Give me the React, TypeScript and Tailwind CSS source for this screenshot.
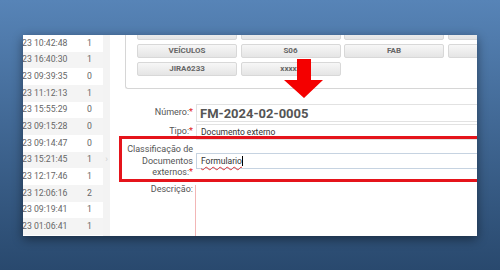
const rows: [string, string][] = [
  ["23 10:42:48", "1"],
  ["23 16:40:30", "1"],
  ["23 09:39:35", "0"],
  ["23 11:12:13", "1"],
  ["23 15:55:29", "0"],
  ["23 09:15:28", "0"],
  ["23 09:14:47", "0"],
  ["23 15:21:45", "1"],
  ["23 12:17:46", "1"],
  ["23 12:06:16", "2"],
  ["23 09:19:41", "1"],
  ["23 01:06:41", "1"],
];

const buttons = ["", "", "", "", "VEÍCULOS", "S06", "FAB", "", "JIRA6233", "xxxxx"];

function Label({ children, req }: { children: React.ReactNode; req?: boolean }) {
  return (
    <div className="w-[83px] shrink-0 text-right text-[9px] leading-[11.5px] text-[#555]">
      {children}
      {req && <span className="text-[#e02020]">*</span>}
    </div>
  );
}

export default function App() {
  return (
    <div className="relative w-[500px] h-[270px] overflow-hidden bg-gradient-to-b from-[#5784b7] to-[#29496e] pt-[35px] pl-[23px] font-['Roboto',sans-serif]">
      <div className="relative flex w-[454px] h-[201px] bg-white overflow-hidden shadow-[0_3px_10px_rgba(0,0,0,0.45)]">
        {/* history list */}
        <div className="w-[80px] shrink-0">
          {rows.map(([t, n], i) => (
            <div
              key={i}
              className={`flex items-center h-[16.67px] text-[8.7px] text-[#666] ${i % 2 ? "bg-[#f4f4f4]" : "bg-white"}`}
            >
              <span className="w-[65px] -ml-[1px] whitespace-nowrap">{t}</span>
              <span>{n}</span>
            </div>
          ))}
        </div>
        <div className="w-[7px] shrink-0 bg-[#f3f3f3] flex justify-center pt-[120px] text-[9px] leading-none text-[#cfcfcf]">›</div>

        {/* form */}
        <div className="flex-1 min-w-0 flex flex-col">
          <div className="ml-[15px] -mt-[9px] w-[400px] shrink-0 border-l border-b border-[#d6d6d6] rounded-bl-[3px] pl-[11px] pb-[12px]">
            <div className="grid grid-cols-[100px_100px_100px_100px] gap-x-[3.5px] gap-y-[4px]">
              {buttons.map((b, i) => (
                <div
                  key={i}
                  className="h-[14px] flex items-center justify-center rounded-[2px] border border-[#d8d8d8] bg-gradient-to-b from-[#f7f7f7] to-[#e5e5e5] text-[8px] font-bold text-[#666]"
                >
                  {b}
                </div>
              ))}
            </div>
          </div>

          <div className="flex items-center h-[18px] mt-[15px]">
            <Label req>Número:</Label>
            <div className="ml-[3px] flex-1 h-full flex items-center pl-[3px] border-y border-l border-[#e2e2e2] text-[13px] font-bold leading-none text-[#555]">
              FM-2024-02-0005
            </div>
          </div>

          <div className="flex items-center h-[16px] mt-[2px]">
            <Label req>Tipo:</Label>
            <div className="ml-[3px] flex-1 h-full flex items-center pl-[4px] border-y border-l border-[#e2e2e2] text-[8.5px] text-[#333]">
              Documento externo
            </div>
          </div>

          <div className="flex items-center mt-[4px]">
            <Label req>
              Classificação de
              <br />
              Documentos
              <br />
              externos:
            </Label>
            <div className="ml-[3px] flex-1 h-[16px] flex items-center pl-[4px] border-y border-l border-[#c6d3e1] text-[8.5px] text-[#333]">
              <span className="underline decoration-wavy decoration-[#e03030] decoration-[1px] underline-offset-2">Formulario</span>
              <span className="w-px h-[10px] bg-black" />
            </div>
          </div>

          <div className="flex flex-1 mt-[5px]">
            <Label>Descrição:</Label>
            <div className="ml-[2px] flex-1 mt-[1px] border-l border-[#f2b6b6]" />
          </div>
        </div>

        {/* highlight box */}
        <div className="absolute left-[96px] top-[101px] w-[370px] h-[46px] border-[3px] border-[#e5141b]" />
      </div>

      {/* arrow */}
      <svg className="absolute left-0 top-0" width="500" height="270" viewBox="0 0 500 270">
        <polygon points="297,59 311,59 311,80 323,80 304,98 284,80 297,80" fill="#f40000" />
      </svg>
    </div>
  );
}
